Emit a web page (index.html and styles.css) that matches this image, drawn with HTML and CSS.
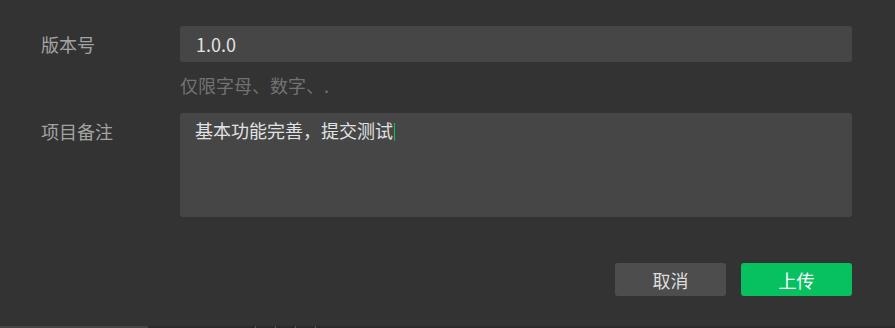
FILE: index.html
```html
<!DOCTYPE html>
<html lang="zh-CN">
<head>
    <meta charset="UTF-8">
    <meta name="viewport" content="width=device-width, initial-scale=1.0">
    <title>上传</title>
    <link rel="stylesheet" href="styles.css">
</head>
<body>
    <div class="upload-dialog">
        <div class="form">
            <div class="form-row">
                <label class="form-label" for="version">版本号</label>
                <div class="form-field">
                    <input class="text-input" id="version" type="text" value="1.0.0">
                    <div class="hint">仅限字母、数字、.</div>
                </div>
            </div>
            <div class="form-row">
                <label class="form-label" for="desc">项目备注</label>
                <div class="form-field">
                    <div class="text-area" id="desc">基本功能完善，提交测试<span class="caret"></span></div>
                </div>
            </div>
        </div>
        <div class="actions">
            <button class="btn btn-cancel">取消</button>
            <button class="btn btn-primary">上传</button>
        </div>
    </div>

    <!-- strip of the panel underneath -->
    <div class="bottom-strip">
        <div class="strip-light"></div>
        <div class="strip-ticks">
            <span></span><span></span><span></span><span></span>
        </div>
    </div>
</body>
</html>
```

FILE: styles.css
```css
body {
    margin: 0;
    padding: 0;
    background: #333;
    color: #ddd;
    font-family: "Noto Sans CJK SC", "Microsoft YaHei", sans-serif;
    font-size: 18px;
    height: 328px;
    display: flex;
    flex-direction: column;
    overflow: hidden;
}
.upload-dialog {
    flex: 1;
    padding: 26px 43px 0 41px;
}
.form-row {
    display: flex;
}
.form-row + .form-row {
    margin-top: 16px;
}
.form-label {
    width: 139px;
    flex-shrink: 0;
    color: #a3a3a3;
    line-height: 36px;
}
.form-row + .form-row .form-label {
    line-height: 36px;
}
.form-field {
    flex: 1;
}
.text-input {
    display: block;
    box-sizing: border-box;
    width: 100%;
    height: 36px;
    padding: 0 16px;
    border: none;
    border-radius: 3px;
    background: #464646;
    color: #e2e2e2;
    font-family: inherit;
    font-size: 18px;
    outline: none;
}
.hint {
    margin-top: 11px;
    line-height: 24px;
    color: #727272;
}
.text-area {
    box-sizing: border-box;
    height: 104px;
    padding: 5px 15px;
    border-radius: 3px;
    background: #464646;
    color: #e2e2e2;
    line-height: 24px;
}
.caret {
    display: inline-block;
    width: 1px;
    height: 18px;
    margin-left: 1px;
    vertical-align: -3px;
    background: #07c160;
}
.actions {
    display: flex;
    justify-content: flex-end;
    gap: 15px;
    margin-top: 46px;
}
.btn {
    width: 111px;
    height: 33px;
    border: none;
    border-radius: 3px;
    font-family: inherit;
    font-size: 18px;
    cursor: pointer;
}
.btn-cancel {
    background: #4d4d4d;
    color: #ddd;
}
.btn-primary {
    background: #07c160;
    color: #fff;
}
.bottom-strip {
    display: flex;
    height: 2px;
    background: #2a2a2a;
}
.strip-light {
    width: 148px;
    background: #454545;
}
.strip-ticks {
    display: flex;
    gap: 19px;
    margin-left: 107px;
}
.strip-ticks span {
    width: 1px;
    background: #555;
}
```
